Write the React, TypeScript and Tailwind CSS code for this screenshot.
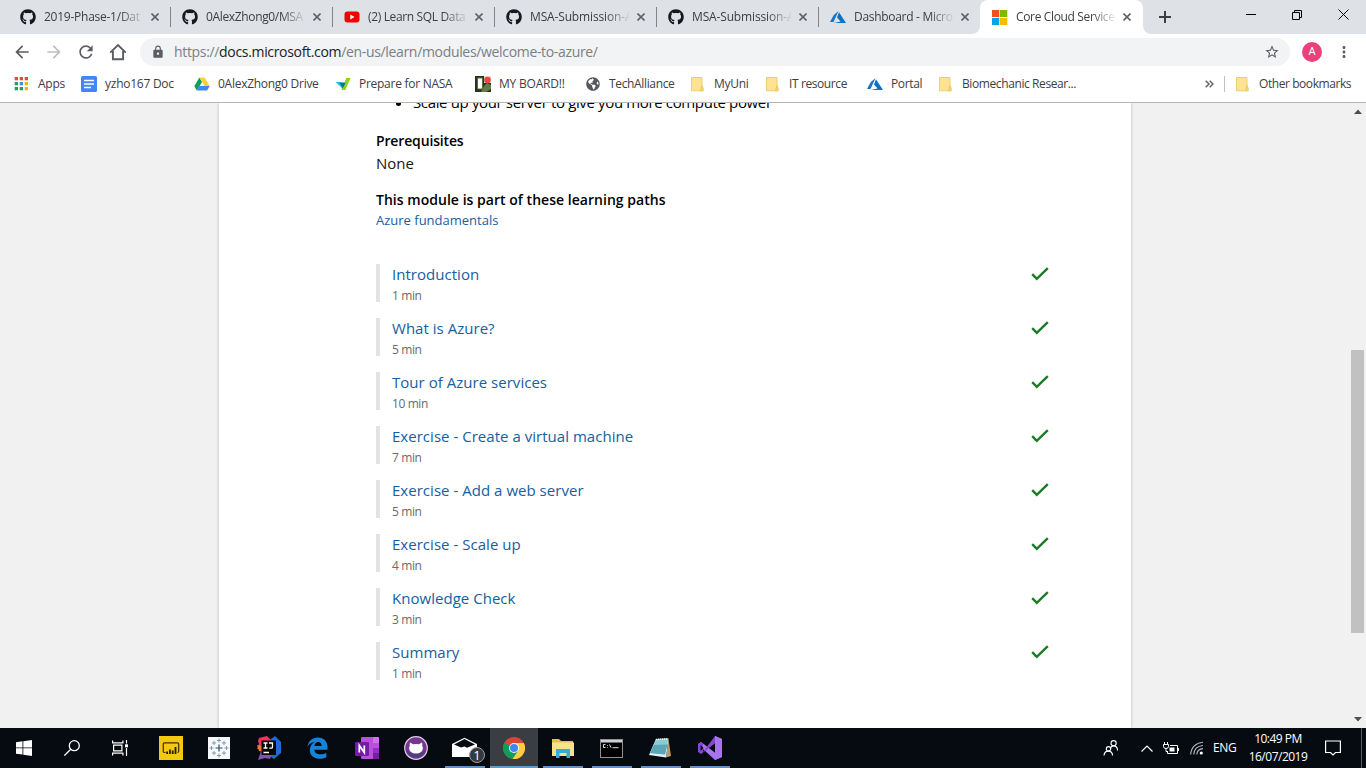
import type { ReactNode } from 'react';
import { FaGithub, FaGlobeAmericas } from 'react-icons/fa';
import { MdArrowBack, MdArrowForward, MdRefresh, MdLock, MdStarBorder, MdMoreVert } from 'react-icons/md';

const GithubMark = () => <FaGithub className="h-4 w-4 shrink-0 text-[#15191e]" />;

const YoutubeIcon = () => (
  <svg className="shrink-0" width="16" height="16" viewBox="0 0 16 16">
    <rect x="0.5" y="2.5" width="15" height="11" rx="3" fill="#f50000" />
    <path d="M6.3 5.6v4.8L10.5 8z" fill="#fff" />
  </svg>
);

const AzureIcon = () => (
  <svg className="shrink-0" width="16" height="16" viewBox="0 0 16 16">
    <path d="M8.5 2L3.8 6 0 13h3.5z" fill="#1a73c4" />
    <path d="M9 3.2L7 8.6l3.6 4L3.8 14H16z" fill="#0a72c9" />
  </svg>
);

const MicrosoftIcon = () => (
  <svg className="shrink-0" width="16" height="16" viewBox="0 0 16 16">
    <path d="M0 1h7.3v7H0z" fill="#f25022" />
    <path d="M8 1h7.3v7H8z" fill="#7fba00" />
    <path d="M0 9h7.3v7H0z" fill="#00a4ef" />
    <path d="M8 9h7.3v7H8z" fill="#ffb900" />
  </svg>
);

const CloseX = () => (
  <svg className="shrink-0" width="8" height="8" viewBox="0 0 8 8" stroke="#5f6368" strokeWidth="1.6">
    <path d="M0.5 0.5l7 7M7.5 0.5l-7 7" />
  </svg>
);

const AppsIcon = () => (
  <svg width="16" height="16" viewBox="0 0 16 16">
    {['#dd4b3e', '#dd4b3e', '#dd4b3e', '#1ba15f', '#4688f1', '#f4b400', '#1ba15f', '#1ba15f', '#f4b400'].map((c, i) => (
      <rect key={i} x={0.7 + (i % 3) * 5} y={1 + Math.floor(i / 3) * 5} width="3.3" height="3.3" fill={c} />
    ))}
  </svg>
);

const DocIcon = () => (
  <svg width="16" height="16" viewBox="0 0 16 16">
    <rect width="16" height="16" rx="1.5" fill="#4285f4" />
    <path d="M3 4.6h10M3 8h10M3 11.4h7" stroke="#fff" strokeWidth="1.5" />
  </svg>
);

const DriveIcon = () => (
  <svg width="16" height="16" viewBox="0 0 16 16">
    <path d="M5.4 1.5L8 6 2.8 14.5 0.3 10.3z" fill="#0f9d58" />
    <path d="M5.4 1.5h5.2l5.1 8.6h-5.2z" fill="#ffcd40" />
    <path d="M5.3 10.1h10.4l-2.6 4.4H2.8z" fill="#4285f4" />
  </svg>
);

const NasaIcon = () => (
  <svg width="16" height="16" viewBox="0 0 16 16">
    <path d="M11.3 2H15.600l-5.300 12H6.400z" fill="#8ad51c" />
    <path d="M0.5 6h5.500L9 8.600 7 12z" fill="#1cc0e8" />
    <path d="M4.500 6.500h5l.8 1L7.600 12.500z" fill="#0f6f9c" />
  </svg>
);

const BoardIcon = () => (
  <svg width="16" height="16" viewBox="0 0 16 16">
    <rect width="16" height="16" fill="#27331d" />
    <path d="M9 10l3-3 4 2v4l-5 3H6z" fill="#637c45" />
    <path d="M2.5 2h5v11h-5z" fill="#fff" stroke="#53703f" />
    <path d="M9 0h7v7H9z" fill="#f3d9d3" />
    <circle cx="12.5" cy="4" r="3.3" fill="#e9473f" />
  </svg>
);

const FolderIcon = () => (
  <svg width="16" height="16" viewBox="0 0 16 16">
    <path d="M1.500 1.500h10.500v13.300h-10.500z" fill="#ffe391" stroke="#e7c55d" strokeWidth="0.8" />
    <path d="M12 9.500l1.300 3v2.300h-3z" fill="#fbd667" stroke="#e7c55d" strokeWidth="0.8" />
  </svg>
);

const tabs: { icon: ReactNode; title: string; tracking: string }[] = [
  { icon: <GithubMark />, title: '2019-Phase-1/Dat', tracking: 'tracking-[-0.25px]' },
  { icon: <GithubMark />, title: '0AlexZhong0/MSA', tracking: 'tracking-[-0.35px]' },
  { icon: <YoutubeIcon />, title: '(2) Learn SQL Data', tracking: 'tracking-[-0.35px]' },
  { icon: <GithubMark />, title: 'MSA-Submission-A', tracking: 'tracking-[-0.15px]' },
  { icon: <GithubMark />, title: 'MSA-Submission-A', tracking: 'tracking-[-0.15px]' },
  { icon: <AzureIcon />, title: 'Dashboard - Micro', tracking: 'tracking-[-0.3px]' },
];

function TabBody({ icon, title, tracking }: { icon: ReactNode; title: string; tracking: string }) {
  return (
    <>
      {icon}
      <span className={`ml-2 w-[99px] shrink-0 whitespace-nowrap [mask-image:linear-gradient(to_right,black_76%,transparent_102%)] ${tracking}`}>
        {title}
      </span>
      <span className="ml-2 shrink-0"><CloseX /></span>
    </>
  );
}

function TabStrip() {
  return (
    <div className="flex h-[34px] shrink-0 bg-[#dee1e6] pl-2 text-xs text-[#3c4043]">
      {tabs.map((t, i) => (
        <div key={i} className="flex w-[162px] shrink-0 items-center pl-3">
          <TabBody {...t} />
          {i < 5 && <span className="ml-[11px] h-5 w-px shrink-0 bg-[#808388]" />}
        </div>
      ))}
      <div className="relative flex w-[163px] shrink-0 items-center rounded-t-lg bg-white pl-3">
        <svg className="absolute bottom-0 -left-2" width="8" height="8"><path d="M8 0v8H0a8 8 0 0 0 8-8" fill="#fff" /></svg>
        <svg className="absolute -right-2 bottom-0" width="8" height="8"><path d="M0 0v8h8a8 8 0 0 1-8-8" fill="#fff" /></svg>
        <TabBody icon={<MicrosoftIcon />} title="Core Cloud Service" tracking="tracking-[-0.35px]" />
      </div>
      <div className="flex flex-1 items-center pl-4">
        <svg width="12" height="12" viewBox="0 0 12 12" stroke="#3c4043" strokeWidth="2"><path d="M6 0v12M0 6h12" /></svg>
      </div>
      <div className="flex h-[29px] text-black">
        <span className="flex w-[46px] items-center justify-center">
          <svg width="10" height="10" viewBox="0 0 10 10" stroke="currentColor"><path d="M0 4.500h10" /></svg>
        </span>
        <span className="flex w-[46px] items-center justify-center">
          <svg width="10" height="10" viewBox="0 0 10 10" stroke="currentColor" fill="none"><path d="M.5 2.500h7v7h-7zM2.500 2.500v-2h7v7h-2" /></svg>
        </span>
        <span className="flex w-[46px] items-center justify-center">
          <svg className="-mt-px" width="11" height="11" viewBox="0 0 11 11" stroke="currentColor"><path d="M.5 .5l10 10M10.500 .5l-10 10" /></svg>
        </span>
      </div>
    </div>
  );
}

function Toolbar() {
  return (
    <div className="flex h-9 shrink-0 items-center pl-3 text-[#5a5d61]">
      <MdArrowBack className="h-5 w-5" />
      <MdArrowForward className="ml-3 h-5 w-5 text-[#bdbfc1]" />
      <MdRefresh className="ml-3 h-5 w-5" />
      <svg className="ml-3" width="20" height="20" viewBox="0 0 20 20" fill="none" stroke="currentColor" strokeWidth="1.900">
        <path d="M2.200 10.600L10 3l7.800 7.600M4.900 9v8.200h10.200V9" />
      </svg>
      <div className="ml-3 flex h-7 w-[1150px] items-center rounded-full bg-[#f1f3f4] pr-[10px] pl-[11px]">
        <MdLock className="h-[14px] w-[14px]" />
        <span className="ml-[9px] flex-1 text-sm tracking-[-0.33px] whitespace-nowrap text-[#7b7f84]">
          https://<span className="text-[#202124]">docs.microsoft.com</span>/en-us/learn/modules/welcome-to-azure/
        </span>
        <MdStarBorder className="h-4 w-4" />
      </div>
      <span className="ml-3 flex h-5 w-5 items-center justify-center rounded-full bg-[#ec407a] font-[Roboto] text-[11px] text-white">A</span>
      <MdMoreVert className="ml-[13px] h-[18px] w-[18px]" />
    </div>
  );
}

const bookmarks: { icon: ReactNode; label: string; cls: string }[] = [
  { icon: <AppsIcon />, label: 'Apps', cls: 'w-[67px] tracking-[-0.25px]' },
  { icon: <DocIcon />, label: 'yzho167 Doc', cls: 'w-[113px] tracking-[-0.25px]' },
  { icon: <DriveIcon />, label: '0AlexZhong0 Drive', cls: 'w-[141px] tracking-[-0.27px]' },
  { icon: <NasaIcon />, label: 'Prepare for NASA', cls: 'w-[140px] tracking-[-0.27px]' },
  { icon: <BoardIcon />, label: 'MY BOARD!!', cls: 'w-[110px] tracking-[-0.2px]' },
  { icon: <FaGlobeAmericas className="h-4 w-4 p-px text-[#55585c]" />, label: 'TechAlliance', cls: 'w-[105px] tracking-[-0.35px]' },
  { icon: <FolderIcon />, label: 'MyUni', cls: 'w-[75px] tracking-[-0.3px]' },
  { icon: <FolderIcon />, label: 'IT resource', cls: 'w-[102px] tracking-[-0.4px]' },
  { icon: <AzureIcon />, label: 'Portal', cls: 'w-[71px] tracking-[-0.35px]' },
  { icon: <FolderIcon />, label: 'Biomechanic Resear...', cls: 'tracking-[-0.4px]' },
];

function BookmarksBar() {
  return (
    <div className="flex h-8 shrink-0 items-center pb-1 pl-[14px] text-xs text-[#3c4043]">
      {bookmarks.map((b) => (
        <div key={b.label} className={`flex shrink-0 items-center gap-2 whitespace-nowrap ${b.cls}`}>
          {b.icon}
          {b.label}
        </div>
      ))}
      <div className="ml-auto flex w-[161px] shrink-0 items-center">
        <svg width="9" height="8" viewBox="0 0 9 8" fill="none" stroke="#5f6368" strokeWidth="1.500"><path d="M.7.8L4 4 .7 7.200M4.700.8L8 4 4.700 7.200" /></svg>
        <span className="mr-[10px] ml-[10px] h-4 w-px bg-[#bfc1c4]" />
        <FolderIcon />
        <span className="ml-2 tracking-[-0.43px] whitespace-nowrap">Other bookmarks</span>
      </div>
    </div>
  );
}

const units = [
  { title: 'Introduction', time: '1 min' },
  { title: 'What is Azure?', time: '5 min' },
  { title: 'Tour of Azure services', time: '10 min' },
  { title: 'Exercise - Create a virtual machine', time: '7 min' },
  { title: 'Exercise - Add a web server', time: '5 min' },
  { title: 'Exercise - Scale up', time: '4 min' },
  { title: 'Knowledge Check', time: '3 min' },
  { title: 'Summary', time: '1 min' },
];

function ModulePage() {
  return (
    <div className="flex min-h-0 flex-1 overflow-hidden border-t border-[#b3b5b7] bg-[#f1f1f1]">
      <main className="ml-[219px] w-[912px] shrink-0 bg-white pr-[82px] pl-[157px] shadow-[0_0_3px_rgba(0,0,0,0.25)]">
        <ul className="-mt-[13px] ml-[37px] list-disc text-[15px] leading-6 tracking-[-0.36px] text-black">
          <li>Scale up your server to give you more compute power</li>
        </ul>
        <h2 className="mt-[15px] text-sm leading-6 font-semibold tracking-[-0.15px] text-black">Prerequisites</h2>
        <p className="-mt-px text-[15px] leading-[22px] text-[#171717]">None</p>
        <h2 className="mt-[14px] text-sm leading-6 font-semibold tracking-[0.03px] text-black">This module is part of these learning paths</h2>
        <a className="-mt-px block text-[13px] leading-[18px] text-[#1460a2]">Azure fundamentals</a>
        <ul className="mt-[35px] flex flex-col gap-4">
          {units.map((u) => (
            <li key={u.title} className="flex h-[38px] justify-between border-l-4 border-[#e3e3e3] pl-3">
              <div>
                <a className="block text-[15px] leading-[21px] tracking-[0.03px] text-[#1460a2]">{u.title}</a>
                <p className="mt-[2px] text-xs leading-[18px] tracking-[-0.4px] text-[#6a6a6a]">{u.time}</p>
              </div>
              <svg className="mt-[2px]" width="18" height="16" viewBox="0 0 18 16" fill="none" stroke="#177d24" strokeWidth="2.400">
                <path d="M1.200 8.200l4.600 4.600L16.800 2.200" />
              </svg>
            </li>
          ))}
        </ul>
      </main>
      <div className="ml-auto flex w-[17px] flex-col items-center bg-[#f1f1f1]">
        <svg className="mt-[6px] shrink-0" width="8" height="5"><path d="M0 5l4-4.500 4 4.500z" fill="#505050" /></svg>
        <div className="mt-[236px] h-[283px] w-[13px] shrink-0 bg-[#c1c1c1]" />
        <svg className="mt-auto mb-[6px] shrink-0" width="8" height="5"><path d="M0 0l4 4.500L8 0z" fill="#505050" /></svg>
      </div>
    </div>
  );
}

const PowerBi = () => (
  <svg width="24" height="24" viewBox="0 0 24 24">
    <rect width="24" height="24" fill="#f2c811" />
    <path d="M6.500 16.500H5.500a1.200 1.200 0 0 1-1.200-1.200V8a1.200 1.200 0 0 1 1.200-1.200h13A1.200 1.200 0 0 1 19.700 8v7.300a1.200 1.200 0 0 1-1.200 1.200" fill="none" stroke="#3b300c" strokeWidth="1.200" />
    <path d="M7.200 15.500h1.800V18h-1.800zM10 13.500h1.800V18h-1.800zM12.800 14.500h1.800V18h-1.800zM15.600 11h1.800V18h-1.800z" fill="#241d06" />
  </svg>
);

const Tableau = () => (
  <svg className="-ml-px" width="22" height="22" viewBox="0 0 22 22">
    <rect width="22" height="22" fill="#f5f7f9" />
    <path d="M11 7.500v7M7.500 11h7" stroke="#2b4e74" strokeWidth="1.200" />
    <path d="M11 1.500v4M9 3.500h4M11 16.500v4M9 18.500h4M3.500 9v4M1.500 11h4M18.500 9v4M16.500 11h4M6 4v4M4 6h4M16 4v4M14 6h4M6 14v4M4 16h4M16 14v4M14 16h4" stroke="#7f9db8" strokeWidth="1" />
  </svg>
);

const Intellij = () => (
  <svg width="24" height="24" viewBox="0 0 24 24">
    <path d="M2 2l8-2 5 5-4 8H0l2-5-1-3z" fill="#f2335e" />
    <path d="M0 9l5 1 2 6-5-1z" fill="#f07b2a" />
    <path d="M14 3l4-3 6 6v11l-7 6-6-4z" fill="#1f69d8" />
    <path d="M4 15h12l-3 8-5-1-7 2z" fill="#8551b4" />
    <rect x="4.500" y="4.500" width="14.500" height="14.500" fill="#060606" />
    <path d="M6.500 7h4M8.500 7v5M6.500 12h4M12 7h3.500v3.800q0 1.500-1.700 1.400h-1.500M6.500 16.500h5.500" fill="none" stroke="#fff" strokeWidth="1.300" />
  </svg>
);

const EdgeIcon = () => (
  <svg width="21" height="22" viewBox="0 0 21 22">
    <path d="M.5 9.700C1.300 4 5.300.5 10.800.5c6 0 9.700 4.200 9.700 9.400v2.800H7.300c.2 3 2.700 4.600 6 4.600 2.300 0 4.400-.6 6-1.600v4.500c-2 1-4.400 1.500-7 1.500-5.700 0-9.500-3.300-9.500-8.600 0-3.700 2-6.800 5.200-8.100C4 5.300 1.800 7.200.5 9.700m6.900-.8h7.200c0-2.500-1.200-4-3.500-4-2 0-3.400 1.700-3.700 4" fill="#1683d9" />
  </svg>
);

const OneNote = () => (
  <svg width="24" height="22" viewBox="0 0 24 22">
    <rect x="6" width="18" height="22" rx="1" fill="#b651d8" />
    <path d="M18 0h5a1 1 0 0 1 1 1v5h-6z" fill="#ca74e8" />
    <path d="M18 11h6v5h-6z" fill="#9330bd" /><path d="M18 16h6v5a1 1 0 0 1-1 1h-5z" fill="#77209e" />
    <rect y="5" width="14" height="14" rx="1" fill="#7719aa" />
    <path d="M4.300 15.500v-7l5 7v-7" fill="none" stroke="#fff" strokeWidth="1.700" />
  </svg>
);

const GithubDesktop = () => (
  <svg width="24" height="24" viewBox="0 0 24 24">
    <circle cx="12" cy="12" r="11.300" fill="#773594" stroke="#ded0e5" strokeWidth="1.200" />
    <path d="M2 14q10 6 20 0a10.300 10.300 0 0 1-20 0" fill="#51407d" />
    <path d="M6 6.500l3.200 1.700q2.800-.6 5.600 0L18 6.500q.6 1.700.2 3.200 1 1.400.6 3.400-.8 4.400-6.800 4.400t-6.800-4.400q-.4-2 .6-3.400Q5.400 8.200 6 6.500" fill="#fff" />
  </svg>
);

const MailIcon = () => (
  <div className="relative ml-[-1px] h-6 w-6">
    <svg width="26" height="24" viewBox="0 0 26 24">
      <path d="M0 8L12.500 1.700 25 8v13H0z" fill="#fff" />
      <path d="M2 8.500L12.500 3l10.500 5.500-8 3.300-2.500-1.300-3.500 1z" fill="#060b12" />
    </svg>
    <span className="absolute top-[11px] left-[17px] flex h-4 w-4 items-center justify-center rounded-full border border-[#9c9fa2] bg-[#35383c] text-[13px] leading-none text-white">1</span>
  </div>
);

const ChromeIcon = () => (
  <svg width="22" height="22" viewBox="0 0 22 22">
    <circle cx="11" cy="11" r="11" fill="#db4437" />
    <path d="M11 11L1.500 5.500A11 11 0 0 0 9.500 21.900L15.300 13.500z" fill="#109d58" />
    <path d="M11 6h9.800A11 11 0 0 1 9.500 21.900l5.800-8.400z" fill="#ffcd40" />
    <circle cx="11" cy="11" r="5" fill="#f4f4f4" /><circle cx="11" cy="11" r="4" fill="#4285f4" />
  </svg>
);

const ExplorerIcon = () => (
  <svg width="22" height="20" viewBox="0 0 22 20">
    <path d="M0 1h7l2 2h12v15H0z" fill="#e8bd48" /><path d="M0 4.500h22V18H0z" fill="#fbe08c" />
    <path d="M4 20v-9h14v9h-3.500v-5h-7v5z" fill="#35abdf" />
  </svg>
);

const ConsoleIcon = () => (
  <svg width="23" height="19" viewBox="0 0 23 19">
    <rect x=".5" y=".5" width="22" height="18" fill="#000" stroke="#929292" />
    <path d="M1 1h21v2.500H1z" fill="#d0d2d4" />
    <path d="M5.500 5.500H3.500v3h2M7.500 6v.8M7.500 8v.7M9.500 5.500l1.500 3.200M12.500 8.700h6" fill="none" stroke="#dadada" />
  </svg>
);

const NotepadIcon = () => (
  <svg width="23" height="22" viewBox="0 0 23 22">
    <path d="M19.500 2l2.500 17-5 1.500z" fill="#b99a69" />
    <path d="M7 2l12.500-.5L17 20.500 0 18z" fill="#e1eff3" />
    <path d="M7 2l12.300-.3L16 17.500 1 16z" fill="#8cc9d6" />
    <path d="M5 8l13.500-.5L16 17.500 1 16z" fill="#5ba7b8" />
    <path d="M7 2.500l12-.6" stroke="#eef3f4" strokeWidth="1.600" strokeDasharray="1.200 .8" />
  </svg>
);

const VisualStudioIcon = () => (
  <svg width="24" height="24" viewBox="0 0 24 24">
    <path d="M17 0l7 3v18l-7 3L0 8.500 3 6l14 10.500z" fill="#a873ee" />
    <path d="M17 0v7.500L3 18 0 16V8l3-2 2 2v8z" fill="#8447cf" />
    <path d="M17 7.500v9L11.300 12z" fill="#060b12" /><path d="M2.500 9v6l3-3z" fill="#060b12" />
    <path d="M17 0l7 3v18l-7 3z" fill="#a873ee" />
  </svg>
);

const taskApps: { icon: ReactNode; state: string }[] = [
  { icon: <PowerBi />, state: 'idle' },
  { icon: <Tableau />, state: 'idle' },
  { icon: <Intellij />, state: 'idle' },
  { icon: <EdgeIcon />, state: 'idle' },
  { icon: <OneNote />, state: 'idle' },
  { icon: <GithubDesktop />, state: 'idle' },
  { icon: <MailIcon />, state: 'open' },
  { icon: <ChromeIcon />, state: 'active' },
  { icon: <ExplorerIcon />, state: 'open' },
  { icon: <ConsoleIcon />, state: 'open' },
  { icon: <NotepadIcon />, state: 'open' },
  { icon: <VisualStudioIcon />, state: 'open' },
];

function TaskCell({ icon, state }: { icon: ReactNode; state: string }) {
  return (
    <div className="flex w-[49px] shrink-0 flex-col items-center">
      <div className={`flex h-[38px] items-center justify-center pt-[2px] ${state === 'active' ? 'w-12 bg-[#3a3d42]' : 'w-10'}`}>{icon}</div>
      <div className={`h-[2px] ${state === 'active' ? 'w-12 bg-[#6399c9]' : state === 'open' ? 'w-10 bg-[#5f92c0]' : 'w-10'}`} />
    </div>
  );
}

function Taskbar() {
  return (
    <div className="flex h-10 shrink-0 bg-[#060b12] text-white">
      <div className="flex w-12 items-center justify-center">
        <svg width="16" height="16" viewBox="0 0 16 16" fill="#fff"><path d="M0 2.200L6.500 1.300v6.200H0zM7.300 1.200L16 0v7.500H7.300zM0 8.300h6.500v6.300L0 13.700zM7.300 8.300H16V16l-8.700-1.300z" /></svg>
      </div>
      <div className="flex w-12 items-center justify-center">
        <svg width="16" height="16" viewBox="0 0 16 16" fill="none" stroke="#fff" strokeWidth="1.300"><circle cx="10.300" cy="5.700" r="5" /><path d="M6.700 9.300L.4 15.600" /></svg>
      </div>
      <div className="flex w-12 items-center justify-center">
        <svg width="16" height="16" viewBox="0 0 16 16" fill="none" stroke="#fff" strokeWidth="1.200"><path d="M.6.500v2.300h10.300V.5M1.600 5.200h8.300v5.600H1.600zM.6 15.500v-2.300h10.300v2.300M14.500 0v3.500M14.500 8v8" /><path d="M13 4.300h3v3h-3z" fill="#fff" stroke="none" /></svg>
      </div>
      <div className="ml-[2px] flex">
        {taskApps.map((a, i) => <TaskCell key={i} {...a} />)}
      </div>
      <div className="ml-auto flex items-center">
        <svg width="16" height="16" viewBox="0 0 16 16" fill="none" stroke="#fff" strokeWidth="1.100"><circle cx="10.600" cy="3.200" r="2.600" /><path d="M7.500 8.500q.5-2.600 3.100-2.600 3.600 0 4 4.600" /><circle cx="5.500" cy="8.800" r="2.200" /><path d="M1 15.500q.3-4.400 4.300-4.400T9.600 15.500" /></svg>
        <svg className="ml-[22px]" width="12" height="7" viewBox="0 0 12 7" fill="none" stroke="#fff" strokeWidth="1.200"><path d="M.5 6.500L6 1l5.500 5.500" /></svg>
        <svg className="ml-[10px]" width="17" height="13" viewBox="0 0 17 13" fill="none" stroke="#fff"><path d="M7 3.500h7.500v8H4.500V9M15.500 6v3M1.500 0v2.500M4.500 0v2.500M.5 2.500h5v2q0 2-2.500 2t-2.500-2zM3 6.500v3h1.500" /><path d="M6.500 5.500h5v4h-5z" fill="#fff" stroke="none" /></svg>
        <svg className="ml-[10px]" width="14" height="14" viewBox="0 0 14 14" fill="none" stroke="#b8bbbf" strokeWidth="1.100"><path d="M.7 13.500C1 6.500 6 1.800 13 1.300M3.800 13.500C4 8.500 7.500 5 13 4.500M6.800 13.500C7 10 9.500 7.900 13 7.600" /><circle cx="11.300" cy="12" r="1.600" fill="#fff" stroke="none" /></svg>
        <span className="ml-[9px] w-[23px] text-xs tracking-[-0.3px]">ENG</span>
        <div className="ml-3 flex w-[60px] flex-col items-center text-xs leading-[18px] tracking-[-0.5px] whitespace-nowrap">
          <span>10:49 PM</span>
          <span>16/07/2019</span>
        </div>
        <svg className="ml-[17px]" width="16" height="16" viewBox="0 0 16 16" fill="none" stroke="#fff" strokeWidth="1.200"><path d="M.6 1h14.800v11.500h-4.900L8 15l-2.500-2.500H.6z" /></svg>
        <span className="mr-1 ml-5 h-10 w-px bg-[#5a5e63]" />
      </div>
    </div>
  );
}

export default function App() {
  return (
    <div className="flex h-[768px] w-[1366px] flex-col overflow-hidden bg-white font-['Open_Sans','Noto_Sans',sans-serif]">
      <TabStrip />
      <Toolbar />
      <BookmarksBar />
      <ModulePage />
      <Taskbar />
    </div>
  );
}
